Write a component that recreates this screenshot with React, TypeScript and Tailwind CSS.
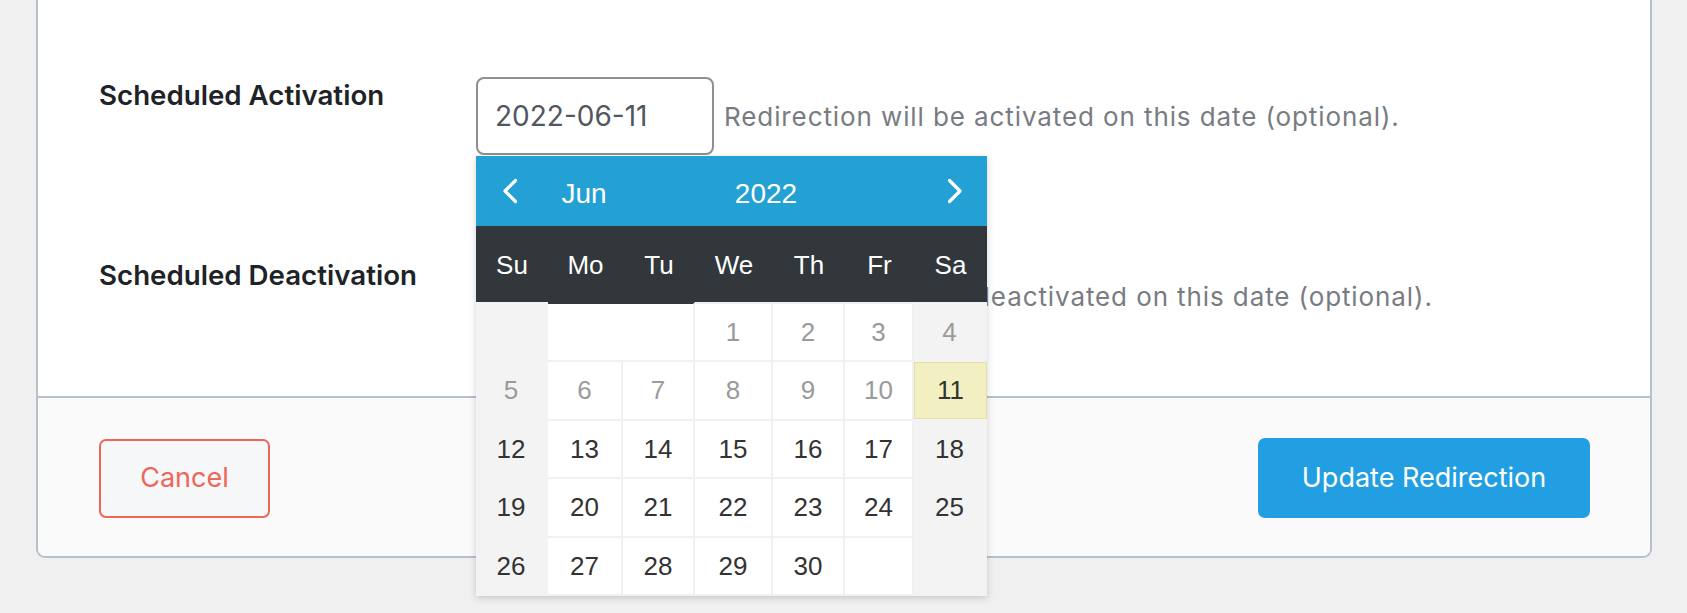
import React from 'react'

type Day = { n?: number; kind: 'past' | 'now' | 'future' | 'empty'; weekend?: boolean; span?: number; top?: boolean }

const weekdays = ['Su', 'Mo', 'Tu', 'We', 'Th', 'Fr', 'Sa']

function buildDays(): Day[] {
  const days: Day[] = []
  // first week: Jun 1 2022 is a Wednesday
  days.push({ kind: 'empty', weekend: true, top: true })
  days.push({ kind: 'empty', span: 2, top: true })
  for (let n = 1; n <= 30; n++) {
    const col = (n + 2) % 7
    const kind = n < 11 ? 'past' : n === 11 ? 'now' : 'future'
    days.push({ n, kind, weekend: col === 0 || col === 6, top: n <= 4 })
  }
  days.push({ kind: 'empty' })
  days.push({ kind: 'empty', weekend: true })
  return days
}

function Chevron({ dir }: { dir: 'left' | 'right' }) {
  return (
    <svg width="16" height="26" viewBox="0 0 16 26" fill="none">
      <path
        d={dir === 'left' ? 'M13.5 2.5 L3 13 L13.5 23.5' : 'M2.5 2.5 L13 13 L2.5 23.5'}
        stroke="white"
        strokeWidth="3.2"
        strokeLinecap="round"
        strokeLinejoin="round"
      />
    </svg>
  )
}

function Calendar() {
  const days = buildDays()
  return (
    <div className="absolute left-0 top-[calc(100%+1px)] z-20 w-[511px] bg-[#f3f3f3] font-['Liberation_Sans',Arial,sans-serif] shadow-[0_2px_7px_rgba(0,0,0,0.18)]">
      <div className="flex h-[70px] items-center bg-[#23a1d4] text-[28px] text-white">
        <div className="flex w-[68px] justify-center">
          <Chevron dir="left" />
        </div>
        <div className="w-[80px] pt-[5px] text-center">Jun</div>
        <div className="w-[284px] pt-[5px] text-center">2022</div>
        <div className="flex flex-1 justify-end pr-[24px]">
          <Chevron dir="right" />
        </div>
      </div>
      <div className="grid h-[76px] grid-cols-[72px_75px_72px_78px_72px_69px_73px] items-center bg-[#32373c] pt-[3px] text-[26px] text-white">
        {weekdays.map(d => (
          <div key={d} className="text-center">{d}</div>
        ))}
      </div>
      <div className="grid grid-cols-[72px_75px_72px_78px_72px_69px_73px] grid-rows-[60px_59px_58px_59px_58px] text-[26px]">
        {days.map((d, i) => {
          if (d.kind === 'now') {
            return (
              <div key={i} className="border-b-2 border-[#f3f3f3] bg-[#f3f3f3]">
                <div className="flex h-full w-full items-center justify-center border border-[#e3e1a4] bg-[#f2f0c2] text-[#333333]">
                  {d.n}
                </div>
              </div>
            )
          }
          const bg = d.weekend ? 'bg-[#f3f3f3] border-[#f3f3f3]' : 'bg-white border-[#f1f1f1]'
          const topBorder = d.top ? (d.kind === 'empty' && !d.weekend ? 'border-t-2 !border-t-[#32373c]' : 'border-t-2') : ''
          const color = d.kind === 'past' ? 'text-[#9a9a9a]' : 'text-[#333333]'
          return (
            <div
              key={i}
              className={`flex items-center justify-center border-b-2 border-r-2 ${bg} ${topBorder} ${color} ${d.span === 2 ? 'col-span-2' : ''}`}
            >
              {d.n}
            </div>
          )
        })}
      </div>
    </div>
  )
}

function Row({ label, help, value, withCalendar }: { label: string; help: string; value: string; withCalendar?: boolean }) {
  return (
    <div className="flex items-start">
      <div className="w-[377px] text-[27.7px] font-semibold leading-[36px] text-[#1d2327]">{label}</div>
      <div className="flex items-center">
        <div className="relative">
          <input
            readOnly
            value={value}
            className="h-[78px] w-[238px] rounded-[8px] border-2 border-[#8c8f94] bg-white px-[17px] font-['Inter',sans-serif] text-[28px] text-[#50575e] outline-none"
          />
          {withCalendar && <Calendar />}
        </div>
        <p className="ml-[10px] text-[26px] tracking-[0.9px] text-[#787c82]">{help}</p>
      </div>
    </div>
  )
}

export default function App() {
  return (
    <div className="h-[613px] w-full overflow-hidden bg-[#f0f0f1] font-['Inter',sans-serif]">
      <div className="ml-[36px] w-[1616px] rounded-b-[9px] border-2 border-t-0 border-[#b7c0cb] bg-white">
        <div className="flex flex-col gap-[102px] px-[61px] pb-[61px] pt-[77px]">
          <Row
            label="Scheduled Activation"
            help="Redirection will be activated on this date (optional)."
            value="2022-06-11"
            withCalendar
          />
          <Row
            label="Scheduled Deactivation"
            help="Redirection will be deactivated on this date (optional)."
            value=""
          />
        </div>
        <div className="flex items-center justify-between rounded-b-[8px] border-t-2 border-[#b7c0cb] bg-[#fafafa] pb-[38px] pl-[61px] pr-[60px] pt-[40px]">
          <button
            type="button"
            className="h-[79px] w-[171px] rounded-[7px] border-2 border-[#ee6658] bg-[#f6f7f9] text-[27px] text-[#ee6658]"
          >
            Cancel
          </button>
          <button
            type="button"
            className="h-[80px] w-[332px] rounded-[7px] bg-[#229fe3] text-[27px] text-white"
          >
            Update Redirection
          </button>
        </div>
      </div>
    </div>
  )
}
